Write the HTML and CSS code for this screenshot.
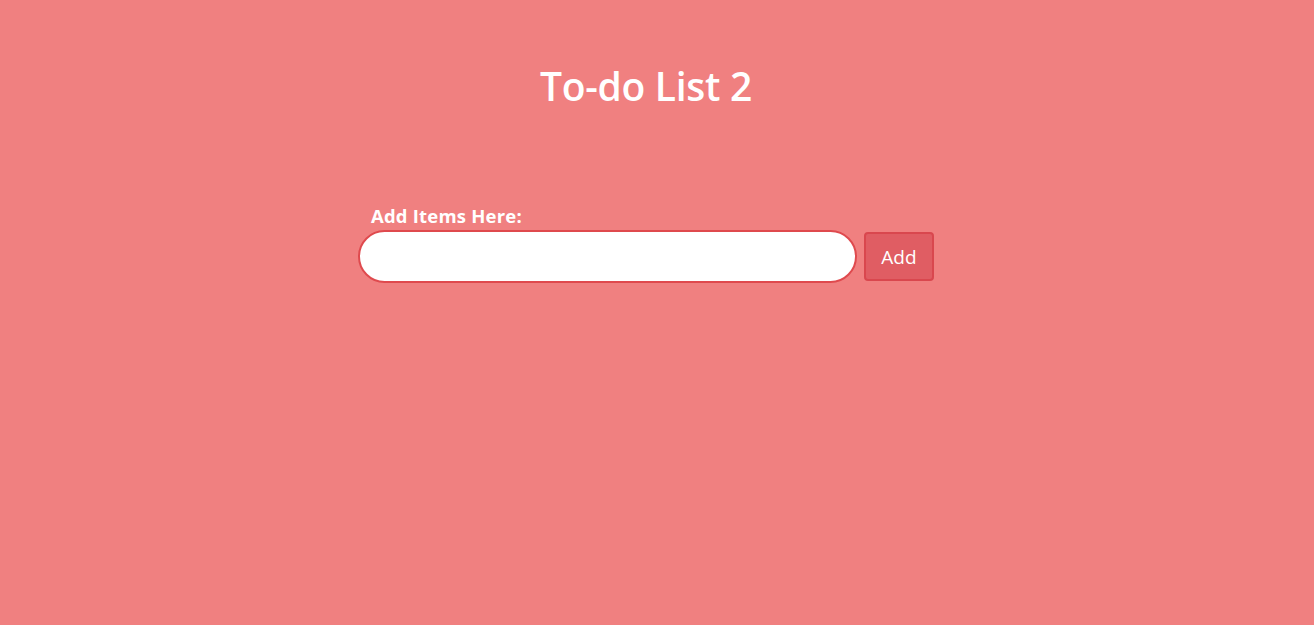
FILE: index.html
```html
<!DOCTYPE html>
<html lang="en">
<head>
<meta charset="utf-8">
<title>To-do List 2</title>
<link rel="stylesheet" href="styles.css">
</head>
<body>
<main class="page">
  <h1 class="title">To-do List 2</h1>
  <form class="add-form">
    <label class="label" for="item">Add Items Here:</label>
    <div class="row">
      <input class="input" id="item" type="text">
      <button class="btn" type="button">Add</button>
    </div>
  </form>
</main>
</body>
</html>
```

FILE: styles.css
```css
* { box-sizing: border-box; }
html, body { margin: 0; padding: 0; }
body {
  background: #f08080;
  font-family: "Open Sans", "Noto Sans", sans-serif;
  color: #fff;
  min-height: 625px;
}
.page {
  display: flex;
  flex-direction: column;
  align-items: center;
  padding-right: 22px;
}
.title {
  margin: 58px 0 0;
  font-size: 39px;
  font-weight: 600;
  line-height: 56px;
  letter-spacing: -0.3px;
}
.add-form {
  margin-top: 91px;
  display: flex;
  flex-direction: column;
}
.label {
  font-size: 18.5px;
  font-weight: 700;
  line-height: 22px;
  margin-left: 13px;
  margin-bottom: 3px;
  letter-spacing: 0.2px;
}
.row {
  display: flex;
  align-items: center;
  gap: 7px;
}
.input {
  width: 499px;
  height: 53px;
  border: 2px solid #df4a4e;
  border-radius: 27px;
  background: #fff;
  outline: none;
  font-size: 18px;
  padding: 0 20px;
}
.btn {
  width: 70px;
  height: 49px;
  background: #e05d63;
  border: 2px solid #d9474e;
  border-radius: 4px;
  color: #fff;
  font-family: inherit;
  font-size: 19px;
  padding: 0;
}
```
